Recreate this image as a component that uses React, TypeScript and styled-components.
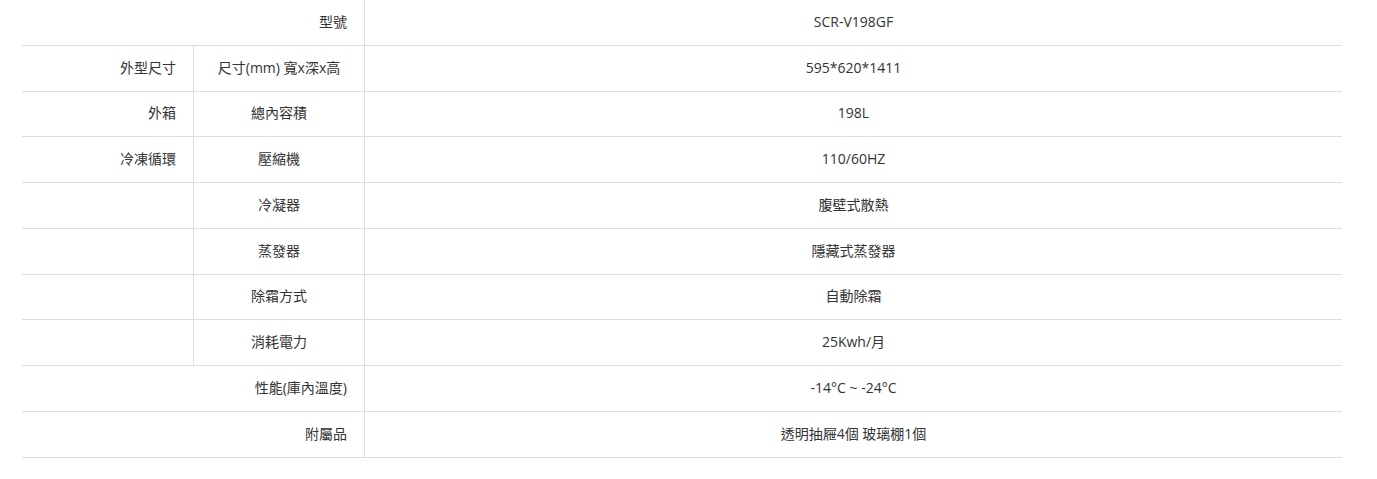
import React from "react"
import styled, { createGlobalStyle } from "styled-components"

const GlobalStyle = createGlobalStyle`
  html, body {
    margin: 0;
    padding: 0;
    background: #fff;
  }
  body {
    font-family: "Open Sans", "Noto Sans CJK TC", sans-serif;
    color: #333;
  }
`

const Wrapper = styled.div`
  padding: 0 35px 0 22px;
`

const Grid = styled.div`
  display: grid;
  grid-template-columns: 171px 171px 1fr;
  grid-auto-rows: 45.78px;
  width: 1320px;
`

type CellProps = {
  $align?: "left" | "center" | "right"
  $span?: number
  $divider?: boolean
}

const Cell = styled.div<CellProps>`
  box-sizing: border-box;
  display: flex;
  align-items: center;
  justify-content: ${({ $align }) =>
    $align === "right" ? "flex-end" : $align === "left" ? "flex-start" : "center"};
  grid-column: span ${({ $span }) => $span || 1};
  padding: 0 17px 1px;
  border-bottom: 1px solid #ddd;
  border-left: ${({ $divider }) => ($divider ? "1px solid #ddd" : "none")};
  font-size: 14px;
  line-height: 1;
  white-space: nowrap;
`

type Row = {
  group?: string
  label: string
  value: string
}

const rows: Row[] = [
  { group: "外型尺寸", label: "尺寸(mm) 寬x深x高", value: "595*620*1411" },
  { group: "外箱", label: "總內容積", value: "198L" },
  { group: "冷凍循環", label: "壓縮機", value: "110/60HZ" },
  { label: "冷凝器", value: "腹壁式散熱" },
  { label: "蒸發器", value: "隱藏式蒸發器" },
  { label: "除霜方式", value: "自動除霜" },
  { label: "消耗電力", value: "25Kwh/月" },
]

const footer: Row[] = [
  { label: "性能(庫內溫度)", value: "-14°C ~ -24°C" },
  { label: "附屬品", value: "透明抽屜4個 玻璃棚1個" },
]

const App = () => (
  <Wrapper>
    <GlobalStyle />
    <Grid>
      <Cell $align="right" $span={2}>型號</Cell>
      <Cell $divider>SCR-V198GF</Cell>
      {rows.map((r) => (
        <React.Fragment key={r.label}>
          <Cell $align="right">{r.group || ""}</Cell>
          <Cell $divider>{r.label}</Cell>
          <Cell $divider>{r.value}</Cell>
        </React.Fragment>
      ))}
      {footer.map((r) => (
        <React.Fragment key={r.label}>
          <Cell $align="right" $span={2}>{r.label}</Cell>
          <Cell $divider>{r.value}</Cell>
        </React.Fragment>
      ))}
    </Grid>
  </Wrapper>
)

export default App
